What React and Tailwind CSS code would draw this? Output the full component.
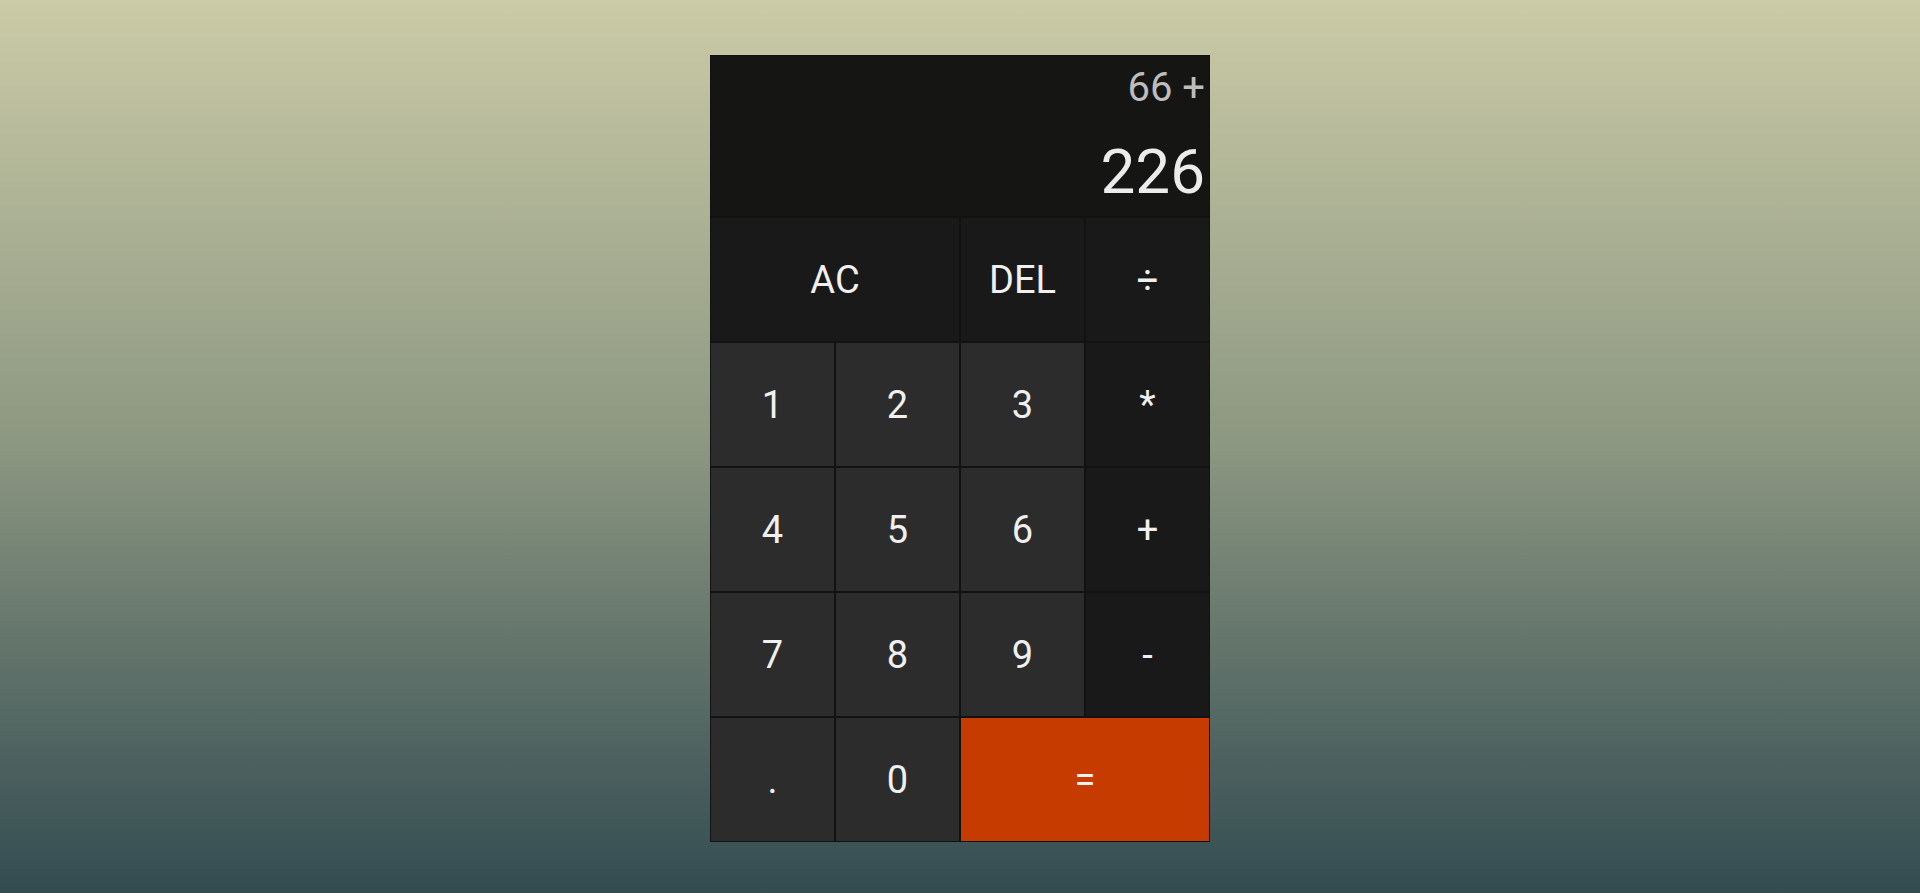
import React, { useState } from 'react';

const keys = [
    { label: 'AC', span: true, kind: 'op' },
    { label: 'DEL', kind: 'op' },
    { label: '÷', kind: 'op' },
    { label: '1' }, { label: '2' }, { label: '3' }, { label: '*', kind: 'op' },
    { label: '4' }, { label: '5' }, { label: '6' }, { label: '+', kind: 'op' },
    { label: '7' }, { label: '8' }, { label: '9' }, { label: '-', kind: 'op' },
    { label: '.' }, { label: '0' }, { label: '=', span: true, kind: 'eq' },
];

export default function App() {
    const [prev] = useState('66 +');
    const [current] = useState('226');

    return (
        <div className="min-h-screen bg-gradient-to-b from-[#cbcba7] via-[#8c9781] to-[#334c51] flex justify-center pt-[55px] font-['Roboto',sans-serif]">
            <div className="grid grid-cols-[repeat(4,125px)] grid-rows-[162px_repeat(5,125px)] self-start">
                {/* Display */}
                <div className="col-span-4 bg-[#151514] border border-[#111] flex flex-col items-end justify-between pr-1 pt-[12px] pb-[13px]">
                    <div className="text-[40px] leading-none text-[#bdbdbd]">{prev}</div>
                    <div className="text-[62px] leading-none text-[#ececec]">{current}</div>
                </div>

                {/* Keys */}
                {keys.map((k) => (
                    <button
                        key={k.label}
                        className={`border border-[#121212] text-[38px] text-[#f0f0f0] flex items-center justify-center pt-[2px] ${
                            k.span ? 'col-span-2' : ''
                        } ${
                            k.kind === 'op'
                                ? 'bg-[#191919]'
                                : k.kind === 'eq'
                                ? 'bg-[#c53b00] border-[#3a1a0a]'
                                : 'bg-[#2c2c2c]'
                        }`}
                    >
                        {k.label}
                    </button>
                ))}
            </div>
        </div>
    );
}
